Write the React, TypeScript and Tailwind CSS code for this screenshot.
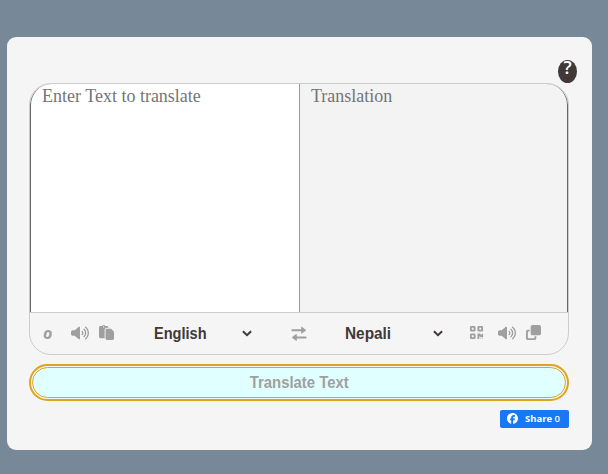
import { FaVolumeHigh, FaPaste, FaQrcode, FaClone, FaFacebook } from "react-icons/fa6";

function Chevron() {
  return (
    <svg className="mr-px" width="10" height="7" viewBox="0 0 10 7" fill="none" stroke="#413838" strokeWidth="2">
      <path d="M.9 1.2 5 5.2l4.1-4" />
    </svg>
  );
}

function Swap() {
  return (
    <svg width="16" height="16" viewBox="0 0 16 16" fill="#9f9f9f">
      <path d="M1.2 3.3h9V1.3q0-.9.7-.5l3.8 2.9q.6.5 0 1l-3.8 2.9q-.7.4-.7-.5V5.2h-9Q.4 5.1.4 4.3t.8-1Z" />
      <path d="M14.8 10.5h-9v-2q0-.9-.7-.5l-3.8 2.9q-.6.5 0 1l3.8 2.9q.7.4.7-.5v-1.9h9q.8-.1.8-.9t-.8-1Z" />
    </svg>
  );
}

function Language({ name, textClass }: { name: string; textClass: string }) {
  return (
    <div className="flex h-6 w-[99px] items-center justify-between text-[#413838]">
      <span className={`origin-left text-[16px] leading-6 font-bold ${textClass}`}>{name}</span>
      <Chevron />
    </div>
  );
}

export default function App() {
  return (
    <main className="h-[474px] w-[608px] overflow-hidden bg-[#778899] pt-[37px] pl-[7px] font-['Liberation_Sans',sans-serif]">
      <div className="h-[413px] w-[585px] rounded-[9px] bg-[#f5f5f5] pt-[23px] pl-[22px]">
        <div className="flex h-[23px] w-[548px] justify-end">
          <div className="flex h-[23px] w-[19px] justify-center rounded-[50%] bg-[#413838] font-['Open_Sans',sans-serif] text-[18px] leading-[14px] font-semibold text-white">
            ?
          </div>
        </div>
        <section className="h-[272px] w-[540px] overflow-hidden rounded-[22px] border border-[#cccccc]">
          <div className="flex h-[228px] font-['Liberation_Serif',serif] text-[18px] leading-[20px] text-[#757575]">
            <div className="w-[270px] rounded-tl-[21px] border-r border-l border-r-[#999999] border-l-[#666666] bg-white pt-[2px] pl-[11px]">
              Enter Text to translate
            </div>
            <div className="w-[268px] rounded-tr-[21px] border-r border-[#666666] bg-[#f3f3f3] pt-[2px] pl-[11px]">
              Translation
            </div>
          </div>
          <div className="flex h-[42px] items-center border-t border-[#cccccc] pl-[13px] text-[#9f9f9f]">
            <span className="-mt-0.5 w-[28px] font-['Open_Sans',sans-serif] text-[16px] font-bold italic">o</span>
            <FaVolumeHigh className="mr-[10px] -mt-0.5 h-4 w-[18px]" />
            <FaPaste className="mr-[40px] -mt-0.5 h-[15px] w-[15px]" />
            <Language name="English" textClass="scale-x-[0.91]" />
            <div className="mr-[38px] ml-[38px]"><Swap /></div>
            <Language name="Nepali" textClass="scale-x-[0.96]" />
            <FaQrcode className="ml-[25px] -mt-0.5 h-[15px] w-[15px]" />
            <FaVolumeHigh className="ml-[14px] -mt-0.5 h-4 w-[18px]" />
            <FaClone className="ml-[10px] -mt-0.5 h-[15px] w-[15px]" />
          </div>
        </section>
        <button className="mt-[9px] block h-[37px] w-[540px] rounded-full border-2 border-[#daa520] bg-[#f5f5f5] p-px">
          <span className="flex h-[31px] items-center justify-center rounded-full border border-[#daa520] bg-[#e0ffff] text-[16px] font-bold text-[#9f9f9f]">
            <span className="scale-x-[0.93]">Translate Text</span>
          </span>
        </button>
        <div className="mt-[9px] flex w-[540px] justify-end">
          <div className="flex h-[18px] w-[69px] items-center rounded-[2px] bg-[#1877f2] pl-[7px] text-white">
            <FaFacebook className="-mt-px h-[11px] w-[11px]" />
            <span className="mt-px ml-[7px] font-['Open_Sans',sans-serif] text-[9.5px] font-bold whitespace-nowrap">Share <span className="font-semibold">0</span></span>
          </div>
        </div>
      </div>
    </main>
  );
}
